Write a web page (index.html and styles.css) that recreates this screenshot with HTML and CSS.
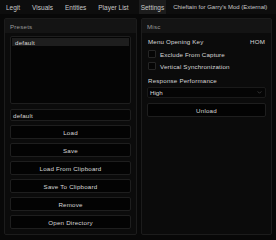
FILE: index.html
```html
<!DOCTYPE html>
<html lang="en">
<head>
    <meta charset="UTF-8">
    <title>Settings</title>
    <link rel="stylesheet" href="styles.css">
</head>
<body>
    <div class="tabs">
        <span class="tab">Legit</span>
        <span class="tab">Visuals</span>
        <span class="tab">Entities</span>
        <span class="tab">Player List</span>
        <span class="tab active">Settings</span>
        <span class="tab title">Chieftain for Garry's Mod (External)</span>
    </div>
    <div class="panels">
        <section class="panel">
            <div class="panel-header">Presets</div>
            <div class="panel-body">
                <div class="list">
                    <div class="list-item selected">default</div>
                </div>
                <div class="input">default</div>
                <div class="buttons">
                    <div class="button">Load</div>
                    <div class="button">Save</div>
                    <div class="button">Load From Clipboard</div>
                    <div class="button">Save To Clipboard</div>
                    <div class="button">Remove</div>
                    <div class="button">Open Directory</div>
                </div>
            </div>
        </section>
        <section class="panel">
            <div class="panel-header">Misc</div>
            <div class="panel-body">
                <div class="row key-row">
                    <span>Menu Opening Key</span>
                    <span class="key">HOM</span>
                </div>
                <div class="row check-row"><span class="checkbox"></span>Exclude From Capture</div>
                <div class="row check-row"><span class="checkbox"></span>Vertical Synchronization</div>
                <div class="label">Response Performance</div>
                <div class="select">
                    <span>High</span>
                    <svg class="chevron" viewBox="0 0 6 4" width="5" height="3"><path d="M0.5 0.5 L3 3 L5.5 0.5" stroke="#555" stroke-width="0.8" fill="none"/></svg>
                </div>
                <div class="button unload">Unload</div>
            </div>
        </section>
    </div>
</body>
</html>
```

FILE: styles.css
```css
body {
    margin: 0;
    background-color: #080808;
    color: #d8d8d8;
    font-family: 'Liberation Sans', Arial, sans-serif;
    font-size: 6.2px;
    width: 276px;
    height: 240px;
    overflow: hidden;
}
.tabs {
    display: flex;
    height: 14px;
    align-items: stretch;
    background-color: #0d0d0d;
    white-space: nowrap;
    font-size: 6.5px;
}
.tab {
    display: flex;
    align-items: center;
    padding: 0 6px;
    color: #c8c8c8;
}
.tab.active {
    background-color: #1c1c1c;
    padding: 0 2px;
    margin: 0 1px 0 4px;
}
.tab.title {
    padding: 0 0 0 6px;
    font-size: 6px;
}
.panels {
    display: grid;
    grid-template-columns: 133px 131px;
    gap: 4px;
    padding: 4px 4px 0 4px;
}
.panel {
    height: 217px;
    box-sizing: border-box;
    background-color: #0b0b0b;
    border: 1px solid #1c1c1c;
    border-radius: 2px;
    display: flex;
    flex-direction: column;
}
.panel-header {
    height: 14px;
    display: flex;
    align-items: center;
    padding-left: 5px;
    background-color: #141414;
    color: #9a9a9a;
    letter-spacing: 0.2px;
}
.panel-body {
    display: flex;
    flex-direction: column;
    padding: 3px 5px 0 5px;
}
.list {
    height: 68px;
    box-sizing: border-box;
    background-color: #050505;
    border: 1px solid #1e1e1e;
    border-radius: 2px;
    padding: 1px;
}
.list-item {
    height: 8px;
    display: flex;
    align-items: center;
    padding-left: 3px;
    letter-spacing: 0.2px;
}
.list-item.selected {
    background-color: #1e1e1e;
}
.input {
    margin-top: 5px;
    height: 12px;
    box-sizing: border-box;
    background-color: #050505;
    border: 1px solid #1e1e1e;
    border-radius: 2px;
    display: flex;
    align-items: center;
    padding-left: 2px;
    letter-spacing: 0.2px;
}
.buttons {
    display: flex;
    flex-direction: column;
    gap: 4px;
    margin-top: 4px;
}
.button {
    height: 14px;
    box-sizing: border-box;
    background-color: #030303;
    border: 1px solid #1e1e1e;
    border-radius: 2px;
    display: flex;
    align-items: center;
    justify-content: center;
    letter-spacing: 0.2px;
}
.row {
    display: flex;
    align-items: center;
    letter-spacing: 0.15px;
}
.key-row {
    height: 8px;
    margin-top: 1px;
    justify-content: space-between;
    padding-left: 1px;
}
.key {
    padding: 0 1px;
}
.check-row {
    height: 8px;
    margin-top: 4px;
}
.key-row + .check-row {
    margin-top: 5px;
}
.checkbox {
    width: 8px;
    height: 8px;
    box-sizing: border-box;
    background-color: #050505;
    border: 1px solid #252525;
    border-radius: 1px;
    margin: 0 4px 0 1px;
}
.label {
    margin-top: 6px;
    height: 8px;
    display: flex;
    align-items: center;
    padding-left: 1px;
    letter-spacing: 0.2px;
}
.select {
    margin-top: 3px;
    height: 11px;
    box-sizing: border-box;
    background-color: #050505;
    border: 1px solid #1a1a1a;
    border-radius: 2px;
    display: flex;
    align-items: center;
    justify-content: space-between;
    padding: 0 3px 0 2px;
}
.unload {
    margin-top: 5px;
}
```
